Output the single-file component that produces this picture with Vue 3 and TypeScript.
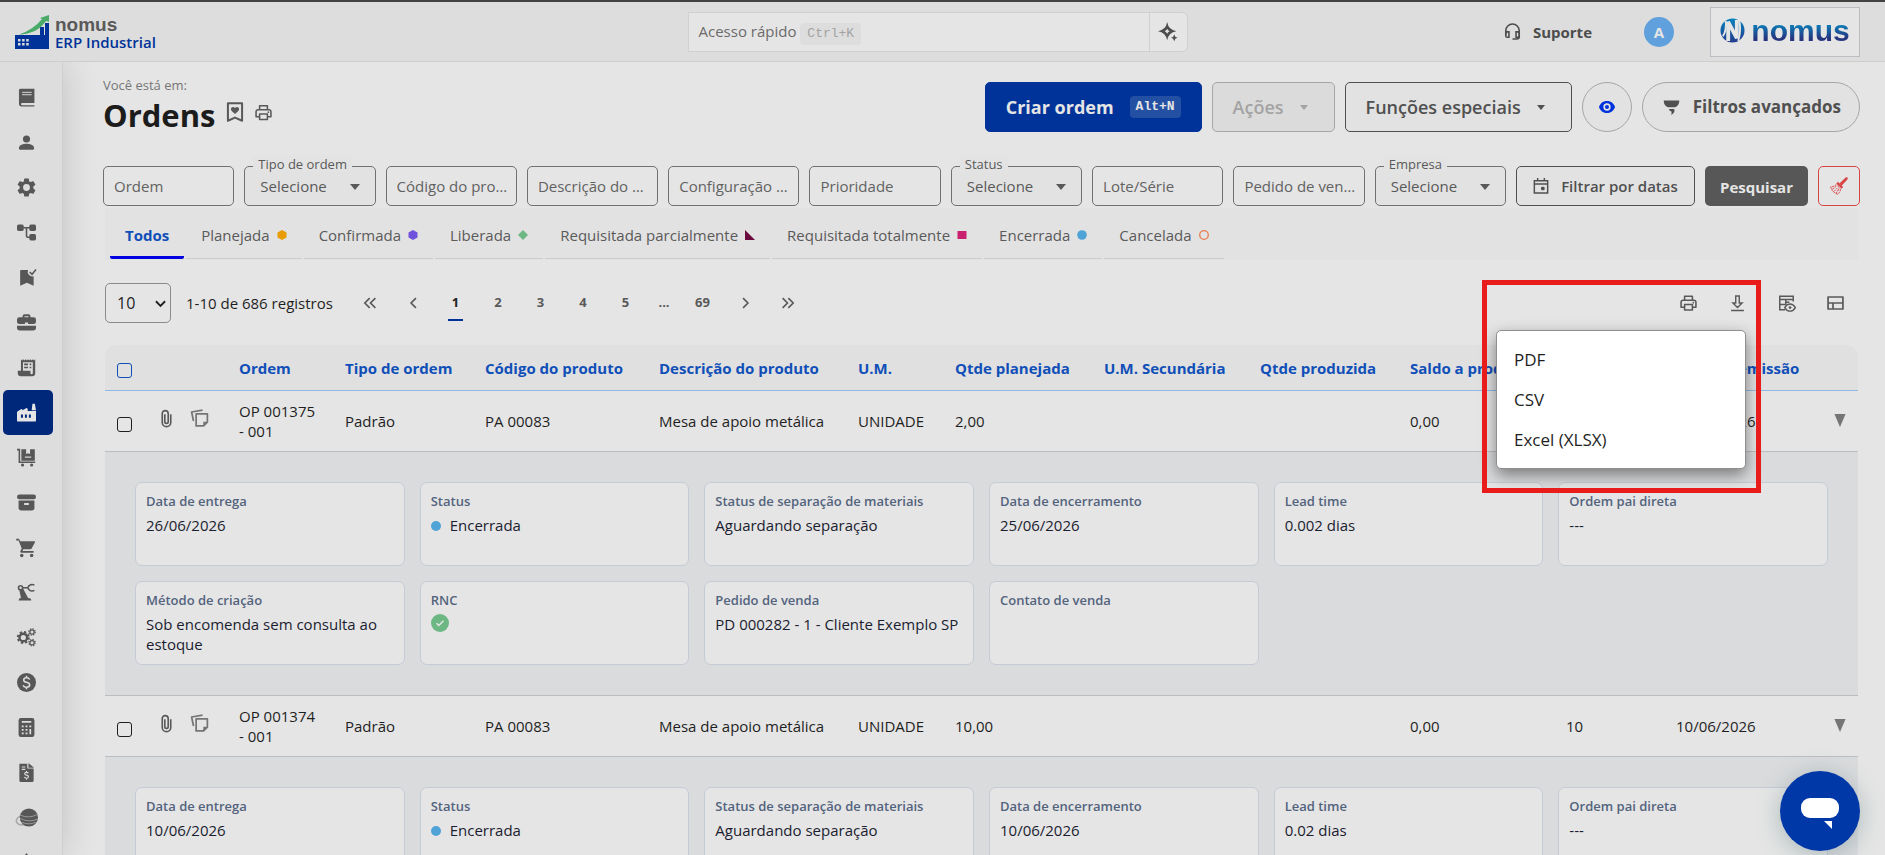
<script setup lang="ts">
import { ref } from 'vue'

interface FilterField { id: string; label: string; kind: 'text' | 'select' }
interface Tab { label: string; shape: string }
interface Detail { label: string; value: string; kind?: 'status' | 'check' }
interface Order { code: string; cells: string[]; details: Detail[] }

const icons: Record<string, string> = {
  book: '<path d="M5 1h17v18H6.500a1.400 1.400 0 0 0 0 2.800H22v1.700H6A3.500 3.500 0 0 1 2.500 20V4A2.500 2.500 0 0 1 5 1z"/><path d="M6.500 5.500h12M6.500 8.500h12" stroke="#ddd" stroke-width="1.200"/>',
  person: '<circle cx="12" cy="7.500" r="4.500"/><path d="M12 13.500c-4 0-9.500 1.500-9.500 5v1q0 1.500 1.500 1.500h16q1.500 0 1.500-1.500v-1c0-3.500-5.500-5-9.500-5z"/>',
  gear: '<path fill-rule="evenodd" transform="translate(12 12) scale(1.200) translate(-12 -12)" d="M19.140 12.940c.04-.3.06-.61.06-.94 0-.32-.02-.64-.07-.94l2.030-1.580c.18-.14.23-.41.12-.61l-1.920-3.320c-.12-.22-.37-.29-.59-.22l-2.390.96c-.5-.38-1.030-.7-1.620-.94l-.36-2.540c-.04-.24-.24-.41-.48-.41h-3.840c-.24 0-.43.17-.47.41l-.36 2.540c-.59.24-1.130.57-1.620.94l-2.390-.96c-.22-.08-.47 0-.59.22L2.740 8.870c-.12.21-.08.47.12.61l2.030 1.580c-.05.3-.09.63-.09.94s.02.64.07.94l-2.030 1.580c-.18.14-.23.41-.12.61l1.920 3.320c.12.22.37.29.59.22l2.390-.96c.5.38 1.030.7 1.620.94l.36 2.540c.05.24.24.41.48.41h3.840c.24 0 .44-.17.47-.41l.36-2.540c.59-.24 1.130-.56 1.620-.94l2.390.96c.22.08.47 0 .59-.22l1.920-3.320c.12-.22.07-.47-.12-.61l-2.010-1.580zM12 15.600a3.600 3.600 0 1 1 0-7.200 3.600 3.600 0 0 1 0 7.200z"/>',
  tree: '<rect x="0" y="2" width="8.500" height="8" rx="2"/><rect x="15.500" y="2" width="8.500" height="8" rx="2"/><rect x="15.500" y="14" width="8.500" height="8" rx="2"/><path d="M8 6h8M12 6v10.500q0 1.500 1.500 1.500H16" fill="none" stroke="currentColor" stroke-width="2"/>',
  bookmark: '<path d="M5 2.500h9a6 6 0 0 0 7 8V22.500l-8.500-4L4 22.500V3.500q0-1 1-1z"/><path d="m16 5 3 3 5-6" fill="none" stroke="currentColor" stroke-width="2"/>',
  briefcase: '<path fill-rule="evenodd" d="M7 5.500V4q0-2.500 2.500-2.500h5Q17 1.500 17 4v1.500h4q3 0 3 3v2.500q0 3-3 3h-7v-2h-4v2H3q-3 0-3-3V8.500q0-3 3-3zM9.500 4v1.500h5V4z"/><path d="M0 16h24v3q0 3-3 3H3q-3 0-3-3z"/>',
  receipt: '<path fill-rule="evenodd" d="M5 1.500 6.500 3 8 1.500 9.500 3 11 1.500 12.500 3 14 1.500 15.500 3 17 1.500 18.500 3 20 1.500 21.500 3 23 1.500V19q0 4-4 4H5q-4 0-4-4v-3h4zM7.500 5.500v10.500H17v3q0 1.500 1.500 1.500t1.500-1.500V5.500z"/><path d="M9 8h5M9 12h5M16 8h2M16 12h2" stroke="currentColor" stroke-width="2"/>',
  factory: '<path d="M18.500 9 19.500 1h3l1.500 8z"/><path fill-rule="evenodd" d="M0 12q0-1 1-1.500l4-2.500q1.500-1 2 1l4.500-2.500q1.500-1 2 1.500v2h10.500v12q0 1.500-1.500 1.500h-21Q0 23.500 0 22zM5 14.500v4h2.500v-4zm5 0v4h2.500v-4zm5 0v4h2.500v-4z"/>',
  trolley: '<path d="M0 2h3v16h20" fill="none" stroke="currentColor" stroke-width="2"/><path d="M5.500 1.500h6v6l2.500-1 2.500 1v-6h6V16h-17z"/><path d="M10 11.500h8" stroke="#ddd" stroke-width="1.500"/><circle cx="7" cy="21.500" r="2"/><circle cx="18.500" cy="21.500" r="2"/>',
  archive: '<rect x="0" y="2" width="24" height="6" rx="3"/><path fill-rule="evenodd" d="M2 9.500h20V19q0 3-3 3H5q-3 0-3-3zM9 12.500v2.500h6v-2.500z"/>',
  cart: '<path d="M-1 1h3.500l1.500 3h18q1.500 0 .7 1.500l-4 7.500q-.6 1.200-2 1.200H8l-1.200 2.300H21v2H5.500q-2 0-1.200-2L6 13.200 2 3h-3z"/><circle cx="6" cy="22" r="2.200"/><circle cx="18.500" cy="22" r="2.200"/>',
  robot: '<circle cx="4.500" cy="6" r="2.600" fill="none" stroke="currentColor" stroke-width="2"/><path d="M7 6h6M22 2.500q-6-2-8.500 3.500 2.500 5.500 8.500 3.500" fill="none" stroke="currentColor" stroke-width="2"/><path d="m3 9 5-1.500 6 11.500q4 0 4 3H2q0-3 3-3z"/>',
  gears: '<circle cx="8" cy="12" r="4.800" fill="none" stroke="currentColor" stroke-width="3"/><circle cx="8" cy="12" r="7" fill="none" stroke="currentColor" stroke-width="2.500" stroke-dasharray="2.900 2.600"/><circle cx="19" cy="5" r="2.700" fill="none" stroke="currentColor" stroke-width="1.600"/><circle cx="19" cy="5" r="4" fill="none" stroke="currentColor" stroke-width="1.600" stroke-dasharray="1.700 1.440"/><circle cx="19" cy="18.500" r="2.700" fill="none" stroke="currentColor" stroke-width="1.600"/><circle cx="19" cy="18.500" r="4" fill="none" stroke="currentColor" stroke-width="1.600" stroke-dasharray="1.700 1.440"/>',
  money: '<circle cx="12" cy="12" r="12"/><path d="M16 8.200Q15 6 12 6 8.500 6 8.500 8.800q0 2.200 3.500 3 4 .9 4 3.400Q16 18 12 18q-3.300 0-4.300-2.600M12 3.500V6m0 12v2.500" fill="none" stroke="#ddd" stroke-width="2"/>',
  calculator: '<rect x="2" y="0" width="20" height="24" rx="3"/><path d="M6 5h12M6 10.500h2.400m2.400 0h2.400m2.400 0H18M6 15h2.400m2.400 0h2.400M6 19.500h2.400m2.400 0h2.400M16.800 14v6.500" stroke="#ddd" stroke-width="2.200"/>',
  invoice: '<path d="M3 1h10v6h8v15q0 2-2 2H5q-2 0-2-2z"/><path d="m14.500 0 7 6h-7z"/><path d="M6 5h4.500M6 8h4.500M14.500 13q-.7-1.200-2.500-1.200-2.300 0-2.300 1.700 0 1.300 2.300 1.800 2.500.5 2.500 2 0 1.900-2.500 1.900-2 0-2.800-1.400M12 10v1.500m0 8v1.500" fill="none" stroke="#ddd" stroke-width="1.400"/>',
  globe: '<ellipse cx="8" cy="15" rx="9" ry="6" fill="none" stroke="#aaa" stroke-width="2" transform="rotate(-15 8 15)"/><circle cx="15" cy="12" r="11.500"/><path d="M4 9q11 5 22-1M4 13q11 6 22 1M6 18q9 4 18 0" fill="none" stroke="#aaa" stroke-width="1"/>',
  more: '<path d="M12 0 15 4H9z"/>',
  savedMark: '<path d="M3.500 1.500h17v21L12 18.700l-8.500 3.800z" fill="none" stroke="currentColor" stroke-width="2.400" stroke-linejoin="round"/><path d="M12 14.500 7.700 10.400Q6.400 8.600 7.600 7 9.800 4.800 12 7.200q2.200-2.400 4.400-.2 1.200 1.600-.1 3.400z"/>',
  printer: '<g fill="none" stroke="currentColor" stroke-width="2.200" stroke-linejoin="round"><path d="M6.500 8V2.500h11V8M6 18H1.500v-7q0-3 3-3h15q3 0 3 3v7H18"/><path d="M6.500 14h11v8h-11z"/></g><circle cx="18.800" cy="11.600" r="1.200"/>',
  sparkle: '<path fill-rule="evenodd" d="M11 0q1.500 9.500 11 11-9.500 1.500-11 11Q9.500 12.500 0 11 9.500 9.500 11 0zM11 8q-.8 2.300-3 3 2.200.7 3 3 .8-2.300 3-3-2.200-.7-3-3z"/><path d="M19.500 15q.6 3.400 4 4-3.400.6-4 4-.6-3.400-4-4 3.400-.6 4-4z"/>',
  headset: '<g fill="none" stroke="currentColor" stroke-width="2.200"><path d="M2.500 17v-6a9.500 9.500 0 0 1 19 0v8q0 3.500-3.500 3.500h-6"/><path d="M2.500 12.500H7V20H4.500q-2 0-2-2zM21.500 12.500H17V20h4.500z"/></g>',
  eye: '<path fill-rule="evenodd" d="M12 3C5.500 3 1.500 7 0 12c1.500 5 5.500 9 12 9s10.500-4 12-9C22.500 7 18.500 3 12 3zm0 3.500a5.500 5.500 0 1 1 0 11 5.500 5.500 0 0 1 0-11z"/><circle cx="12" cy="12" r="3"/>',
  funnel: '<path d="M1 2h22q0 7-6 9.500H7Q1 9 1 2z"/><path d="M8.500 14H16v4.500L12 23v-5.500q-3.500-.5-3.500-3.500z"/>',
  calendar: '<path fill="none" stroke="currentColor" stroke-width="2.200" d="M2 4h20v18.500H2zM2 9h20M7 0v4M17 0v4"/><rect x="12" y="13" width="5.500" height="5.500" rx="2"/>',
  broom: '<path d="m12.500 8.500 7-6.500q2-2.500 4-1.500 1 2-1.500 4l-6.500 7z"/><path d="m9.500 7.500 7 7" stroke="currentColor" stroke-width="3"/><path d="M8.500 10q-3 3-7.500 3 1 7 9.500 10 3.500-3 3.500-8M3 16.500 10 11M5 19.500l7-7M8 22l5-8" fill="none" stroke="currentColor" stroke-width="1.300" stroke-dasharray="3 1"/>',
  download: '<path d="M9.500 2h5v10h4L12 18.500 5.500 12h4zM3 22.500h18" fill="none" stroke="currentColor" stroke-width="2"/>',
  tableView: '<path d="M10 21.500H2.500v-19h19V10M2.500 7h19M2.500 14H11V7M11 11h5" fill="none" stroke="currentColor" stroke-width="2.100"/><path d="M9.500 18.500q3-5 7.500-5t7.500 5q-3 5-7.500 5t-7.500-5z" fill="none" stroke="currentColor" stroke-width="2"/><circle cx="17" cy="18.500" r="2"/>',
  layout: '<path d="M1.500 3.500h21v17h-21zM1.500 12h21M8.500 12v8.500" fill="none" stroke="currentColor" stroke-width="2.400" stroke-linejoin="round"/>',
  clip: '<path d="M18 6v11.500a6 6 0 0 1-12 0V5a4.200 4.200 0 0 1 8.400 0v11.500a2.400 2.400 0 0 1-4.800 0V6" fill="none" stroke="currentColor" stroke-width="2.300"/>',
  copy: '<g fill="none" stroke="currentColor" stroke-width="2.300" stroke-linejoin="round"><path d="M7.500 6.500h15v11l-5 5h-10z"/><path d="M4 16 1.500 4 16 1.500"/></g><path d="M17 17h6l-6 6z"/>',
}

const sideItems = [
  ['book', 'Cadastros'], ['person', 'Pessoas'], ['gear', 'Engenharia'], ['tree', 'Estrutura'], ['bookmark', 'Qualidade'],
  ['briefcase', 'Comercial'], ['receipt', 'Pedidos'], ['factory', 'Produção'], ['trolley', 'Estoque'], ['archive', 'Materiais'],
  ['cart', 'Compras'], ['robot', 'Equipamentos'], ['gears', 'Processos'], ['money', 'Financeiro'], ['calculator', 'Custos'],
  ['invoice', 'Fiscal'], ['globe', 'Portal'], ['more', 'Mais'],
]

const fields: FilterField[] = [
  { id: 'ordem', label: 'Ordem', kind: 'text' },
  { id: 'tipo', label: 'Tipo de ordem', kind: 'select' },
  { id: 'codigo', label: 'Código do produto', kind: 'text' },
  { id: 'descricao', label: 'Descrição do produto', kind: 'text' },
  { id: 'config', label: 'Configuração do produto', kind: 'text' },
  { id: 'prioridade', label: 'Prioridade', kind: 'text' },
  { id: 'status', label: 'Status', kind: 'select' },
  { id: 'lote', label: 'Lote/Série', kind: 'text' },
  { id: 'pedido', label: 'Pedido de venda', kind: 'text' },
  { id: 'empresa', label: 'Empresa', kind: 'select' },
]

const tabs: Tab[] = [
  { label: 'Todos', shape: '' },
  { label: 'Planejada', shape: '<path fill="#e89c05" d="M5 0 9.500 2.500v5L5 10 .5 7.500v-5z"/>' },
  { label: 'Confirmada', shape: '<path fill="#6f53dc" d="M5 0 9.500 2.500v5L5 10 .5 7.500v-5z"/>' },
  { label: 'Liberada', shape: '<path fill="#6cb784" d="m5 0 5 5-5 5-5-5z"/>' },
  { label: 'Requisitada parcialmente', shape: '<path fill="#6b0a3c" d="m0 0 10 10H0z"/>' },
  { label: 'Requisitada totalmente', shape: '<path fill="#c9206f" d="M.5 1h9v8h-9z"/>' },
  { label: 'Encerrada', shape: '<circle fill="#4fa3d6" cx="5" cy="5" r="4.800"/>' },
  { label: 'Cancelada', shape: '<circle fill="none" stroke="#e57b4a" stroke-width="1.300" cx="5" cy="5" r="4.300"/>' },
]
const activeTab = ref('Todos')

const pages = ['1', '2', '3', '4', '5', '...', '69']
const currentPage = ref('1')
const menuOpen = ref(true)
const exportFormats = ['PDF', 'CSV', 'Excel (XLSX)']

const columns = ['Ordem', 'Tipo de ordem', 'Código do produto', 'Descrição do produto', 'U.M.', 'Qtde planejada',
  'U.M. Secundária', 'Qtde produzida', 'Saldo a produzir', '', 'Data de emissão']

const orders: Order[] = [
  {
    code: 'OP 001375 - 001',
    cells: ['Padrão', 'PA 00083', 'Mesa de apoio metálica', 'UNIDADE', '2,00', '', '', '0,00', '', '25/06/2026'],
    details: [
      { label: 'Data de entrega', value: '26/06/2026' },
      { label: 'Status', value: 'Encerrada', kind: 'status' },
      { label: 'Status de separação de materiais', value: 'Aguardando separação' },
      { label: 'Data de encerramento', value: '25/06/2026' },
      { label: 'Lead time', value: '0.002 dias' },
      { label: 'Ordem pai direta', value: '---' },
      { label: 'Método de criação', value: 'Sob encomenda sem consulta ao estoque' },
      { label: 'RNC', value: '', kind: 'check' },
      { label: 'Pedido de venda', value: 'PD 000282 - 1 - Cliente Exemplo SP' },
      { label: 'Contato de venda', value: '' },
    ],
  },
  {
    code: 'OP 001374 - 001',
    cells: ['Padrão', 'PA 00083', 'Mesa de apoio metálica', 'UNIDADE', '10,00', '', '', '0,00', '10', '10/06/2026'],
    details: [
      { label: 'Data de entrega', value: '10/06/2026' },
      { label: 'Status', value: 'Encerrada', kind: 'status' },
      { label: 'Status de separação de materiais', value: 'Aguardando separação' },
      { label: 'Data de encerramento', value: '10/06/2026' },
      { label: 'Lead time', value: '0.02 dias' },
      { label: 'Ordem pai direta', value: '---' },
    ],
  },
]
</script>

<template>
  <div class="app">
    <header class="topbar">
      <a class="brand" href="#">
        <svg class="brand-mark" viewBox="0 0 34 34" aria-hidden="true">
          <path fill="#003399" d="M0 20h25v-8h4v8h1V8h4v26H0z" />
          <path fill="#4aaa6a" d="M4 19.500Q18 15 27 4l-2-1 9-3v7l-3-1Q22 19 4 19.500z" />
          <path stroke="#dddddd" stroke-width="2.500" stroke-dasharray="2.500 1.600" d="M3 25.200h11M3 29.200h11" />
        </svg>
        <span class="brand-text">
          <span class="brand-name">nomus</span>
          <span class="brand-product">ERP Industrial</span>
        </span>
      </a>
      <div class="quick">
        <button class="quick-field" type="button">Acesso rápido <kbd>Ctrl+K</kbd></button>
        <button class="quick-ai" type="button" aria-label="Assistente">
          <svg viewBox="0 0 24 24" v-html="icons.sparkle" />
        </button>
      </div>
      <div class="top-right">
        <a class="support" href="#"><svg viewBox="0 0 24 24" v-html="icons.headset" />Suporte</a>
        <button class="avatar" type="button">A</button>
        <div class="company">
          <svg viewBox="0 0 26 26" aria-hidden="true">
            <defs><linearGradient id="disc" x1="0" y1="0" x2="0" y2="1"><stop offset="0" stop-color="#0a83bd" /><stop offset="1" stop-color="#233a8c" /></linearGradient></defs>
            <circle cx="13" cy="13" r="12.500" fill="url(#disc)" />
            <path d="M3 19Q7 13 6 3M19.500 0q3 12-.5 24" fill="none" stroke="#e5e5e5" stroke-width="2" />
            <path d="M8.500 24V4l9 17V2" fill="none" stroke="#e5e5e5" stroke-width="4" />
          </svg>
          <span>nomus</span>
        </div>
      </div>
    </header>

    <div class="body">
      <nav class="sidebar">
        <a v-for="[icon, name] in sideItems" :key="icon" href="#" :class="{ active: icon === 'factory' }" :aria-label="name">
          <svg viewBox="0 0 24 24" v-html="icons[icon]" />
        </a>
      </nav>

      <main>
        <div class="heading">
          <div>
            <p class="crumb">Você está em:</p>
            <div class="title">
              <h1>Ordens</h1>
              <button type="button" aria-label="Favoritar"><svg viewBox="0 0 24 24" v-html="icons.savedMark" /></button>
              <button type="button" aria-label="Imprimir página"><svg class="small" viewBox="0 0 24 24" v-html="icons.printer" /></button>
            </div>
          </div>
          <div class="actions">
            <button class="btn primary" type="button">Criar ordem <kbd>Alt+N</kbd></button>
            <button class="btn drop disabled" type="button" disabled>Ações <i class="caret" /></button>
            <button class="btn drop" type="button">Funções especiais <i class="caret" /></button>
            <button class="btn eye" type="button" aria-label="Visualizar"><svg viewBox="0 0 24 24" v-html="icons.eye" /></button>
            <button class="btn pill" type="button"><svg viewBox="0 0 24 24" v-html="icons.funnel" />Filtros avançados</button>
          </div>
        </div>

        <form class="filters" @submit.prevent>
          <div v-for="f in fields" :key="f.id" class="field" :class="f.kind">
            <template v-if="f.kind === 'text'">
              <input :id="f.id" type="text" :placeholder="f.label" :aria-label="f.label" />
            </template>
            <template v-else>
              <label :for="f.id">{{ f.label }}</label>
              <select :id="f.id"><option>Selecione</option></select>
              <i class="caret" />
            </template>
          </div>
          <button class="dates" type="button"><svg viewBox="0 0 24 24" v-html="icons.calendar" />Filtrar por datas</button>
          <button class="search" type="submit">Pesquisar</button>
          <button class="clear" type="reset" aria-label="Limpar filtros"><svg viewBox="0 0 24 24" v-html="icons.broom" /></button>
        </form>

        <div class="tabs">
          <button v-for="t in tabs" :key="t.label" type="button" :class="{ active: t.label === activeTab }" @click="activeTab = t.label">
            {{ t.label }}<svg v-if="t.shape" viewBox="0 0 10 10" v-html="t.shape" />
          </button>
        </div>

        <div class="listbar">
          <div class="size">
            <select aria-label="Registros por página"><option>10</option></select>
            <svg viewBox="0 0 12 8" aria-hidden="true"><path d="m1 1 5 5 5-5" /></svg>
          </div>
          <span class="count">1-10 de 686 registros</span>
          <div class="pages">
            <button type="button" aria-label="Primeira"><svg viewBox="0 0 16 14"><path d="M7 1 1 7l6 6M14 1 8 7l6 6" /></svg></button>
            <button type="button" aria-label="Anterior"><svg viewBox="0 0 16 14"><path d="m11 1-6 6 6 6" /></svg></button>
            <button v-for="p in pages" :key="p" type="button" :class="{ active: p === currentPage, gap: p === '...' }" @click="currentPage = p"><span>{{ p }}</span></button>
            <button type="button" aria-label="Próxima"><svg viewBox="0 0 16 14"><path d="m5 1 6 6-6 6" /></svg></button>
            <button type="button" aria-label="Última"><svg viewBox="0 0 16 14"><path d="m2 1 6 6-6 6M9 1l6 6-6 6" /></svg></button>
          </div>
          <div class="tools">
            <button type="button" aria-label="Imprimir"><svg viewBox="0 0 24 24" v-html="icons.printer" /></button>
            <div class="export">
              <button type="button" aria-label="Exportar" @click="menuOpen = !menuOpen"><svg viewBox="0 0 24 24" v-html="icons.download" /></button>
              <div class="callout" />
              <div v-if="menuOpen" class="menu">
                <button v-for="f in exportFormats" :key="f" type="button">{{ f }}</button>
              </div>
            </div>
            <button type="button" aria-label="Colunas"><svg viewBox="0 0 24 24" v-html="icons.tableView" /></button>
            <button type="button" aria-label="Layout"><svg viewBox="0 0 24 24" v-html="icons.layout" /></button>
          </div>
        </div>

        <table>
          <colgroup>
            <col class="c-check" /><col class="c-icons" /><col class="c-order" /><col class="c-type" /><col class="c-code" />
            <col class="c-desc" /><col class="c-unit" /><col class="c-plan" /><col class="c-unit2" /><col class="c-made" />
            <col class="c-left" /><col class="c-days" /><col class="c-date" /><col class="c-toggle" />
          </colgroup>
          <thead>
            <tr>
              <th><input type="checkbox" aria-label="Selecionar todas" /></th>
              <th />
              <th v-for="c in columns" :key="c">{{ c }}</th>
              <th />
            </tr>
          </thead>
          <tbody v-for="o in orders" :key="o.code">
            <tr class="row">
              <td><input type="checkbox" :aria-label="'Selecionar ' + o.code" /></td>
              <td>
                <div class="row-icons">
                  <svg class="clip" viewBox="0 0 24 24" v-html="icons.clip" />
                  <svg class="copy" viewBox="0 0 24 24" v-html="icons.copy" />
                </div>
              </td>
              <td>{{ o.code }}</td>
              <td v-for="(c, i) in o.cells" :key="i">{{ c }}</td>
              <td><button class="toggle" type="button" aria-label="Detalhes"><svg viewBox="0 0 12 14"><path d="M0 0h12L6 14z" /></svg></button></td>
            </tr>
            <tr class="detail">
              <td colspan="14">
                <div class="cards">
                  <section v-for="d in o.details" :key="d.label" class="card">
                    <h2>{{ d.label }}</h2>
                    <svg v-if="d.kind === 'check'" class="ok" viewBox="0 0 18 18"><circle cx="9" cy="9" r="9" /><path d="m5.500 9.300 2.300 2.200 4.700-4.800" /></svg>
                    <p v-else><i v-if="d.kind === 'status'" class="dot" />{{ d.value }}</p>
                  </section>
                </div>
              </td>
            </tr>
          </tbody>
        </table>
      </main>
    </div>

    <button class="chat" type="button" aria-label="Abrir chat">
      <svg viewBox="0 0 40 32"><rect x="1" y="0" width="38" height="20" rx="9" /><path d="M24 23h8v8z" /></svg>
    </button>
  </div>
</template>

<style>
html, body { margin: 0; background: #e5e5e5; }
</style>

<style scoped>
* { box-sizing: border-box; }
.app { height: 100vh; overflow: hidden; display: flex; flex-direction: column; background: #e5e5e5; color: #1f1f1f; font: 15px/20px "Open Sans", sans-serif; border-top: 2px solid #424242; }
button, input, select { font: inherit; color: inherit; margin: 0; }
button { background: none; border: 0; padding: 0; cursor: pointer; }
a { color: inherit; text-decoration: none; }
svg { display: block; fill: currentColor; overflow: visible; flex: none; }

.topbar { height: 60px; flex: none; display: grid; grid-template-columns: 1fr 500px 1fr; align-items: center; background: #dddddd; border-bottom: 1px solid #cdcdcd; padding: 0 25px 0 15px; position: relative; z-index: 2; }
.brand { display: flex; align-items: center; gap: 6px; }
.brand-mark { width: 34px; height: 34px; }
.brand-text { display: flex; flex-direction: column; padding-top: 2px; }
.brand-name { font: 700 19px/18px "Liberation Sans", sans-serif; color: #595959; }
.brand-product { font-size: 15px; line-height: 16px; font-weight: 600; color: #003399; }
.quick { display: flex; height: 40px; border: 1px solid #d0d0d0; border-radius: 0 6px 6px 0; background: #e5e5e5; }
.quick-field { flex: 1; text-align: left; padding: 2px 10px 0; color: #6b6b6b; }
kbd { font: 13px/22px "Liberation Mono", monospace; border-radius: 4px; display: inline-block; padding: 0 7px; }
.quick kbd { background: #dddddd; color: #a3a3a3; }
.quick-ai { width: 38px; border-left: 1px solid #d0d0d0; display: grid; place-items: center; color: #4d4d4d; }
.quick-ai svg { width: 20px; }
.top-right { display: flex; align-items: center; justify-content: flex-end; }
.support { display: flex; align-items: center; gap: 12px; font-weight: 700; color: #4d4d4d; margin-right: 52px; }
.support svg { width: 17px; }
.avatar { width: 30px; height: 30px; border-radius: 50%; background: #60a0dc; color: #e5e5e5; font-weight: 700; margin-right: 36px; }
.company { width: 150px; height: 50px; border: 1px solid #bcbcc2; background: #e5e5e5; display: flex; align-items: center; justify-content: center; gap: 6px; padding-bottom: 2px; }
.company svg { width: 25px; height: 25px; }
.company span { font: 700 30px/30px "Liberation Sans", sans-serif; background: linear-gradient(#0a83bd 25%, #26357f 75%); -webkit-background-clip: text; background-clip: text; color: transparent; }

.body { flex: 1; display: flex; min-height: 0; }
.sidebar { width: 63px; flex: none; background: #dddddd; border-right: 1px solid #cfcfcf; padding: 13px 9px 0 3px; box-shadow: 0 0 36px rgba(0, 0, 0, .16); color: #575757; }
.sidebar a { display: grid; place-items: center; height: 45px; border-radius: 5px; padding-right: 3px; }
.sidebar a.active { background: #00287a; color: #e5e5e5; }
.sidebar svg { width: 19px; height: 19px; }

main { flex: 1; min-width: 0; padding: 13px 25px 0 40px; }
.heading { display: flex; justify-content: space-between; align-items: flex-start; height: 91px; }
.crumb { margin: 0; font-size: 13px; line-height: 20px; color: #767676; }
.title { display: flex; align-items: center; gap: 10px; color: #595959; }
.title button { padding-bottom: 6px; }
h1 { margin: 0; font-size: 31px; line-height: 40px; font-weight: 700; color: #1c1c1c; }
.title svg { width: 20px; height: 20px; }
.title svg.small { width: 17px; height: 17px; }
.actions { display: flex; gap: 10px; padding-top: 7px; }
.btn { height: 50px; border: 1px solid #505050; border-radius: 5px; background: #e2e2e2; color: #505050; font-size: 18px; font-weight: 600; padding: 0 20px; display: flex; align-items: center; gap: 16px; white-space: nowrap; }
.btn.drop { padding-right: 26px; }
.btn.primary { background: #003399; border-color: #003399; color: #e5e5e5; font-weight: 700; }
.btn kbd { font-weight: 700; background: #2450a4; padding: 0 6px; }
.btn.disabled { background: #dbdbdb; color: #a3a3a3; border-color: #a6a6a6; }
.btn.eye { width: 50px; padding: 0 16px; border-radius: 50%; border-color: #a6a6a6; color: #0033dd; }
.btn.eye svg { width: 16px; }
.btn.pill { border-radius: 25px; border-color: #a6a6a6; font-size: 17px; font-weight: 700; gap: 13px; padding: 0 18px 0 20px; }
.btn.pill svg { width: 17px; }
.caret { width: 0; height: 0; border: 5px solid transparent; border-top: 6px solid currentColor; border-bottom: 0; flex: none; }
.btn .caret { border-width: 5px 4px 0; }

.filters { display: flex; gap: 10px; height: 40px; color: #595959; }
.field { flex: 1 1 0; min-width: 0; position: relative; display: flex; }
.field input, .field select { width: 100%; height: 40px; border: 1px solid #717171; border-radius: 5px; background: transparent; padding: 0 8px 0 10px; text-overflow: ellipsis; appearance: none; }
.field input::placeholder { color: #626262; opacity: 1; }
.field select { padding: 0 15px; background: #e2e2e2; }
.field label { position: absolute; left: 9px; top: -10px; padding: 0 5px; font-size: 13px; line-height: 16px; background: #e3e3e3; white-space: nowrap; }
.field .caret { position: absolute; right: 16px; top: 18px; pointer-events: none; }
.dates, .search, .clear { height: 40px; border-radius: 5px; flex: none; display: flex; align-items: center; justify-content: center; }
.dates { width: 179px; gap: 12px; font-weight: 600; border: 1px solid #505050; color: #505050; background: #e2e2e2; }
.dates svg { width: 16px; }
.search { width: 103px; background: #575757; color: #e5e5e5; font-weight: 700; padding-top: 2px; }
.clear { width: 42px; border: 1px solid #d84545; color: #d84545; }
.clear svg { width: 18px; }

.tabs { display: flex; gap: 2px; margin: 2px 2px 0; height: 52px; padding: 0 5px; background: #e2e2e2; color: #5a5a5a; }
.tabs button { height: 51px; display: flex; align-items: center; gap: 7px; padding: 7px 15px 4px; border-bottom: 1px solid #cccccc; white-space: nowrap; }
.tabs button.active { color: #104fb8; font-weight: 700; border-bottom: 3px solid #0000e0; border-radius: 2px; padding-bottom: 2px; }
.tabs svg { width: 10px; height: 10px; }

.listbar { display: flex; align-items: center; margin: 23px 2px 22px; height: 40px; }
.size { position: relative; width: 66px; }
.size select { width: 100%; height: 40px; appearance: none; border: 1px solid #8a8a8a; border-radius: 5px; background: transparent; padding: 0 11px; font-size: 16px; }
.size svg { position: absolute; right: 5px; top: 17px; width: 11px; height: 8px; fill: none; stroke: #1f1f1f; stroke-width: 2; pointer-events: none; }
.count { margin-left: 15px; width: 163px; white-space: nowrap; }
.pages { display: flex; color: #595959; }
.pages button { width: 43px; height: 40px; display: grid; place-items: center; font-size: 13px; font-weight: 700; }
.pages button:nth-child(even) { width: 42px; }
.pages button.gap { width: 34px; }
.pages svg { width: 13px; height: 12px; fill: none; stroke: currentColor; stroke-width: 2; }
.pages span { min-width: 15px; align-self: start; text-align: center; line-height: 34px; padding-top: 2px; border-bottom: 2px solid transparent; }
.pages .active { color: #1f1f1f; }
.pages .active span { border-color: #003399; }
.tools { margin-left: auto; display: flex; gap: 25px; padding-right: 11px; color: #595959; }
.tools > button, .export > button { width: 24px; height: 40px; display: grid; place-items: center; }
.tools svg { width: 17px; height: 18px; }
.export { position: relative; }
.callout { position: absolute; top: -3px; right: -12px; width: 279px; height: 213px; border: 5px solid #e91c1c; z-index: 3; pointer-events: none; }
.menu { position: absolute; top: 47px; right: 3px; width: 250px; padding: 9px 0 8px; background: #ffffff; border: 1px solid #8f8f8f; border-radius: 5px; box-shadow: 0 6px 16px rgba(0, 0, 0, .45); z-index: 2; }
.menu button { display: block; width: 100%; height: 40px; text-align: left; padding: 0 17px; color: #1f1f1f; font-size: 17px; }

table { width: calc(100% - 4px); margin: 0 2px; border-collapse: separate; border-spacing: 0; table-layout: fixed; }
.c-check { width: 45px; } .c-icons { width: 77px; } .c-order { width: 106px; } .c-type { width: 140px; }
.c-code { width: 174px; } .c-desc { width: 199px; } .c-unit { width: 97px; } .c-plan { width: 149px; }
.c-unit2 { width: 156px; } .c-made { width: 150px; } .c-left { width: 156px; } .c-days { width: 110px; }
.c-date { width: 146px; } .c-toggle { width: 48px; }
th, td { padding: 0 12px; text-align: left; }
th { height: 46px; background: #e0e0e0; color: #104fb8; font-weight: 700; white-space: nowrap; border-bottom: 1px solid #8fb8e6; }
th:first-child { border-top-left-radius: 12px; }
th:last-child { border-top-right-radius: 12px; }
.row td { height: 61px; border-bottom: 1px solid #bcbdbf; }
.row td:last-child { padding: 0 0 0 24px; }
input[type="checkbox"] { appearance: none; display: block; width: 15px; height: 15px; border: 1px solid currentColor; border-radius: 3px; margin-top: 6px; }
.row-icons { display: flex; align-items: center; gap: 15px; margin-left: -4px; color: #757575; padding-bottom: 6px; }
.row-icons .clip { width: 17px; height: 17px; color: #595959; }
.row-icons .copy { width: 19px; height: 18px; }
.toggle svg { width: 12px; height: 13px; color: #757575; }
.detail > td { padding: 30px; background: #dadbdd; border-bottom: 1px solid #bcbdbf; }
.cards { display: grid; grid-template-columns: repeat(6, minmax(0, 1fr)); gap: 15px; }
.card { min-height: 84px; border: 1px solid #c5cbd6; border-radius: 7px; background: #e5e5e5; padding: 8px 10px; color: #1b1d30; }
.card h2 { margin: 0 0 4px; font-size: 13px; line-height: 20px; font-weight: 600; color: #53637d; white-space: nowrap; }
.card p { margin: 0; }
.dot { display: inline-block; width: 10px; height: 10px; border-radius: 50%; background: #4fa3d6; margin-right: 9px; }
.ok { width: 18px; height: 18px; fill: #6cb784; }
.ok path { fill: none; stroke: #e5e5e5; stroke-width: 1.5; }

.chat { position: fixed; right: 25px; bottom: 4px; width: 80px; height: 80px; border-radius: 50%; background: #0038a8; display: grid; place-items: center; box-shadow: 0 4px 24px rgba(60, 100, 110, .35); z-index: 5; }
.chat svg { width: 40px; height: 32px; fill: #ffffff; margin-top: 6px; }
</style>
